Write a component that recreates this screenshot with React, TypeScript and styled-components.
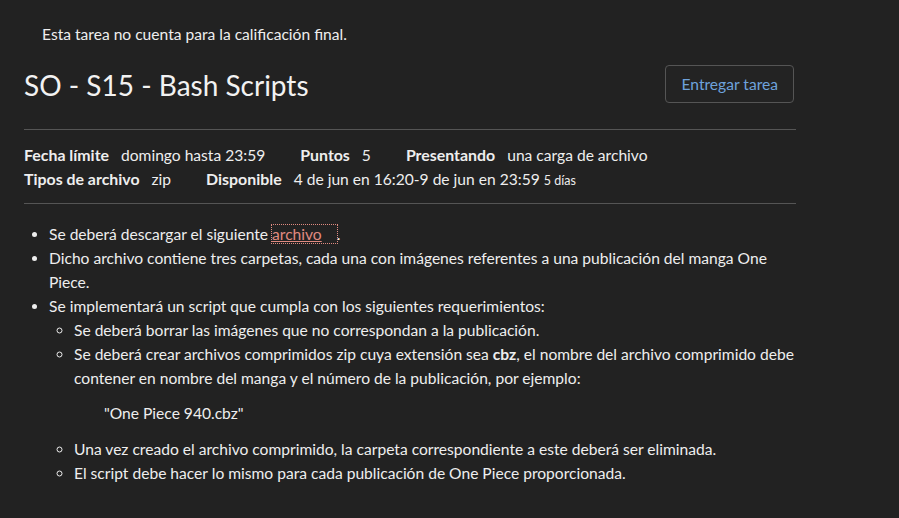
import React from "react";
import styled, { createGlobalStyle } from "styled-components";

const Global = createGlobalStyle`
  html, body { margin: 0; padding: 0; background: #222222; }
  body { font-family: Lato, "Noto Sans", sans-serif; color: #eeeeee; font-size: 15.6px; }
`;

const Page = styled.div`
  width: 772px;
  padding: 23px 0 0 24px;
`;

const Note = styled.div`
  padding-left: 18px;
  line-height: 22px;
  margin-bottom: 20px;
`;

const Header = styled.div`
  display: flex;
  justify-content: space-between;
  align-items: flex-start;
  padding-bottom: 26px;
  border-bottom: 1px solid #555555;
`;

const Title = styled.h1`
  margin: 0;
  padding-top: 3px;
  font-size: 28px;
  font-weight: 400;
  line-height: 34px;
  color: #f2f2f2;
`;

const Button = styled.button`
  font-family: inherit;
  font-size: 15.6px;
  color: #6ea2dc;
  background: #232323;
  border: 1px solid #555555;
  border-radius: 4px;
  height: 38px;
  padding: 0 15px 0 16px;
  margin-right: 2px;
`;

const Details = styled.div`
  padding: 13px 0 10px;
  border-bottom: 1px solid #555555;
`;

const DetailRow = styled.div`
  display: flex;
  line-height: 24px;
`;

const Detail = styled.div`
  margin-right: 35px;
`;

const Label = styled.b`
  font-weight: 700;
  font-size: 15.9px;
  margin-right: 12px;
`;

const Small = styled.span`
  font-size: 12.5px;
`;

const List = styled.ul<{ $nested?: boolean }>`
  margin: ${(p) => (p.$nested ? "0" : "18px 0 0")};
  padding-left: 25px;
  list-style-type: ${(p) => (p.$nested ? "circle" : "disc")};
  line-height: 24px;
`;

const Item = styled.li``;

const Link = styled.a`
  color: #e08a80;
  text-decoration: underline;
  outline: 1px dotted #e08a80;
  padding-right: 15px;
`;

const Quote = styled.blockquote`
  margin: 11px 0 12px 30px;
`;

export default function App() {
  return (
    <>
      <Global />
      <Page>
        <Note>Esta tarea no cuenta para la calificación final.</Note>
        <Header>
          <Title>SO - S15 - Bash Scripts</Title>
          <Button>Entregar tarea</Button>
        </Header>
        <Details>
          <DetailRow>
            <Detail>
              <Label>Fecha límite</Label>domingo hasta 23:59
            </Detail>
            <Detail>
              <Label>Puntos</Label>5
            </Detail>
            <Detail>
              <Label>Presentando</Label>una carga de archivo
            </Detail>
          </DetailRow>
          <DetailRow>
            <Detail>
              <Label>Tipos de archivo</Label>zip
            </Detail>
            <Detail>
              <Label>Disponible</Label>4 de jun en 16:20-9 de jun en 23:59 <Small>5 días</Small>
            </Detail>
          </DetailRow>
        </Details>
        <List>
          <Item>
            Se deberá descargar el siguiente <Link>archivo</Link>.
          </Item>
          <Item>
            Dicho archivo contiene tres carpetas, cada una con imágenes referentes a una publicación del manga One Piece.
          </Item>
          <Item>
            Se implementará un script que cumpla con los siguientes requerimientos:
            <List $nested>
              <Item>Se deberá borrar las imágenes que no correspondan a la publicación.</Item>
              <Item>
                Se deberá crear archivos comprimidos zip cuya extensión sea <b>cbz</b>, el nombre del archivo comprimido debe contener en nombre del manga y el número de la publicación, por ejemplo:
                <Quote>"One Piece 940.cbz"</Quote>
              </Item>
              <Item>Una vez creado el archivo comprimido, la carpeta correspondiente a este deberá ser eliminada.</Item>
              <Item>El script debe hacer lo mismo para cada publicación de One Piece proporcionada.</Item>
            </List>
          </Item>
        </List>
      </Page>
    </>
  );
}
